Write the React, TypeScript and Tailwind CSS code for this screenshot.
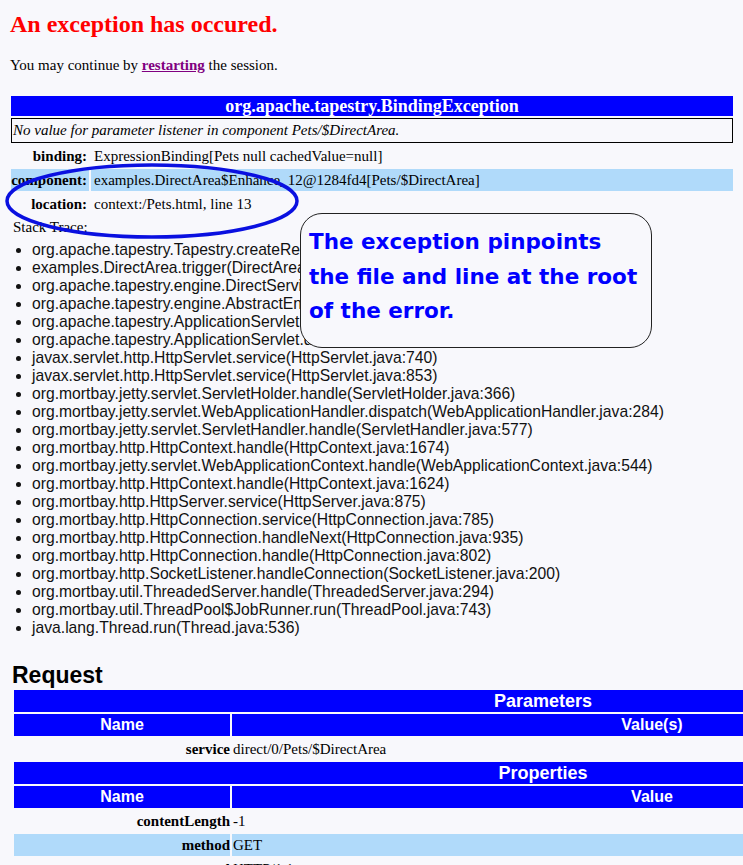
import React from 'react';

const serif = { fontFamily: '"Liberation Serif", "Times New Roman", serif' };
const sans = { fontFamily: '"Liberation Sans", Arial, sans-serif' };

const stack = [
  'org.apache.tapestry.Tapestry.createRequiredParameterException(Tapestry.java:1178)',
  'examples.DirectArea.trigger(DirectArea.java:32)',
  'org.apache.tapestry.engine.DirectService.service(DirectService.java:169)',
  'org.apache.tapestry.engine.AbstractEngine.service(AbstractEngine.java:872)',
  'org.apache.tapestry.ApplicationServlet.doService(ApplicationServlet.java:197)',
  'org.apache.tapestry.ApplicationServlet.doGet(ApplicationServlet.java:158)',
  'javax.servlet.http.HttpServlet.service(HttpServlet.java:740)',
  'javax.servlet.http.HttpServlet.service(HttpServlet.java:853)',
  'org.mortbay.jetty.servlet.ServletHolder.handle(ServletHolder.java:366)',
  'org.mortbay.jetty.servlet.WebApplicationHandler.dispatch(WebApplicationHandler.java:284)',
  'org.mortbay.jetty.servlet.ServletHandler.handle(ServletHandler.java:577)',
  'org.mortbay.http.HttpContext.handle(HttpContext.java:1674)',
  'org.mortbay.jetty.servlet.WebApplicationContext.handle(WebApplicationContext.java:544)',
  'org.mortbay.http.HttpContext.handle(HttpContext.java:1624)',
  'org.mortbay.http.HttpServer.service(HttpServer.java:875)',
  'org.mortbay.http.HttpConnection.service(HttpConnection.java:785)',
  'org.mortbay.http.HttpConnection.handleNext(HttpConnection.java:935)',
  'org.mortbay.http.HttpConnection.handle(HttpConnection.java:802)',
  'org.mortbay.http.SocketListener.handleConnection(SocketListener.java:200)',
  'org.mortbay.util.ThreadedServer.handle(ThreadedServer.java:294)',
  'org.mortbay.util.ThreadPool$JobRunner.run(ThreadPool.java:743)',
  'java.lang.Thread.run(Thread.java:536)',
];

const props = [
  { name: 'binding', value: 'ExpressionBinding[Pets null cachedValue=null]', odd: false },
  { name: 'component', value: 'examples.DirectArea$Enhance_12@1284fd4[Pets/$DirectArea]', odd: true },
  { name: 'location', value: 'context:/Pets.html, line 13', odd: false },
];

const SectionHeader: React.FC<{ title: string }> = ({ title }) => (
  <tr>
    <th colSpan={2} className="bg-[#0000ff] text-white font-bold text-[18px] leading-[22px] text-center" style={sans}>
      {title}
    </th>
  </tr>
);

const ColHeader: React.FC<{ value: string }> = ({ value }) => (
  <tr>
    <th className="w-[216px] bg-[#0000ff] text-white font-bold text-[16px] leading-[22px] text-center" style={sans}>
      Name
    </th>
    <th className="bg-[#0000ff] text-white font-bold text-[16px] leading-[22px] text-center" style={sans}>
      {value}
    </th>
  </tr>
);

const Row: React.FC<{ name: string; value: string; odd?: boolean }> = ({ name, value, odd }) => (
  <tr className="text-[15px] leading-[22px]">
    <th className={`text-right font-bold ${odd ? 'bg-[#b0dafa]' : ''}`}>{name}</th>
    <td className={`pl-px ${odd ? 'bg-[#b0dafa]' : ''}`}>{value}</td>
  </tr>
);

const App: React.FC = () => {
  return (
    <div className="relative w-[743px] h-[865px] overflow-hidden bg-[#f8f8fc] text-black" style={serif}>
      <div className="px-[10px] pt-[10px]">
        <h1 className="text-[24px] leading-[28px] font-bold text-[#ff0000]">An exception has occured.</h1>
        <p className="mt-[18px] text-[15px] leading-[18px]">
          You may continue by{' '}
          <a href="#" className="font-bold text-[#800080] underline">restarting</a> the session.
        </p>

        {/* exception table */}
        <table className="mt-[20px] ml-px w-[722px] border-separate border-spacing-y-[2px] border-spacing-x-0 text-[15px]">
          <tbody>
            <tr>
              <th colSpan={2} className="bg-[#0000ff] text-white font-bold text-[18px] leading-[20px] text-center">
                org.apache.tapestry.BindingException
              </th>
            </tr>
            <tr>
              <td colSpan={2} className="border border-black italic leading-[23px] px-px">
                No value for parameter listener in component Pets/$DirectArea.
              </td>
            </tr>
            {props.map((p) => (
              <tr key={p.name} className="leading-[22px]">
                <th className={`w-[78px] pr-[2px] text-right font-bold whitespace-nowrap ${p.odd ? 'bg-[#b0dafa]' : ''}`}>
                  {p.name}:
                </th>
                <td className={`pl-[3px] border-l-2 border-[#f8f8fc] ${p.odd ? 'bg-[#b0dafa]' : ''}`}>{p.value}</td>
              </tr>
            ))}
          </tbody>
        </table>

        <div className="mt-[1px] ml-[3px] text-[15px] leading-[18px]">Stack Trace:</div>
        <ul className="mt-[5px] ml-[22px] list-disc text-[15.7px] leading-[18px] text-[#111]" style={sans}>
          {stack.map((s, i) => (
            <li key={i} className="whitespace-nowrap">{s}</li>
          ))}
        </ul>

        <h2 className="mt-[25px] ml-[2px] text-[23px] leading-[26px] font-bold" style={sans}>
          Request
        </h2>

        <table className="ml-[2px] w-[1062px] border-separate border-spacing-[2px] -mx-[2px]">
          <tbody>
            <SectionHeader title="Parameters" />
            <ColHeader value="Value(s)" />
            <Row name="service" value="direct/0/Pets/$DirectArea" />
            <SectionHeader title="Properties" />
            <ColHeader value="Value" />
            <Row name="contentLength" value="-1" />
            <Row name="method" value="GET" odd />
            <Row name="protocol" value="HTTP/1.1" />
          </tbody>
        </table>
      </div>

      {/* highlight ellipse */}
      <svg className="absolute left-[4px] top-[162px]" width="296" height="78" viewBox="0 0 296 78">
        <ellipse cx="148" cy="39" rx="145" ry="36" fill="none" stroke="#0a10e0" strokeWidth="3.5" />
      </svg>

      {/* callout */}
      <div
        className="absolute left-[300px] top-[213px] w-[352px] h-[135px] rounded-[22px] border border-[#222] bg-[#f8f8fc] pl-[8px] pt-[11px] text-[#0000ff] font-bold text-[21.5px] leading-[34.5px]"
        style={{ fontFamily: '"DejaVu Sans", Verdana, sans-serif' }}
      >
        The exception pinpoints
        <br />
        the file and line at the root
        <br />
        of the error.
      </div>
    </div>
  );
};

export default App;
